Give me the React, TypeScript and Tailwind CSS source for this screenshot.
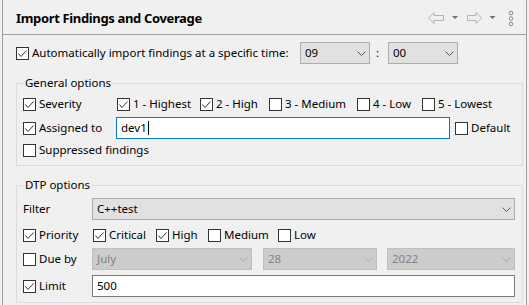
import React from "react";

const FONT = { fontFamily: '"Noto Sans", "Open Sans", sans-serif' };

function Check({ checked }: { checked: boolean }) {
  return (
    <span className="w-[13px] h-[13px] border border-[#333333] bg-white flex items-center justify-center shrink-0">
      {checked && (
        <svg width="11" height="11" viewBox="0 0 11 11">
          <path d="M1.5 5.5 L4 8.5 L9.5 2.5" stroke="#333333" strokeWidth="1" fill="none" />
        </svg>
      )}
    </span>
  );
}

function CheckItem({ checked, label, className }: { checked: boolean; label: string; className: string }) {
  return (
    <div className={"flex items-center gap-[3px] shrink-0 " + className}>
      <Check checked={checked} />
      <span className="whitespace-nowrap leading-none">{label}</span>
    </div>
  );
}

function Chevron({ color }: { color: string }) {
  return (
    <svg width="9" height="5" viewBox="0 0 9 5" className="shrink-0">
      <path d="M0.5 0.5 L4.5 4.5 L8.5 0.5" stroke={color} strokeWidth="1" fill="none" />
    </svg>
  );
}

function Combo({ text, className, disabled }: { text: string; className: string; disabled?: boolean }) {
  return (
    <div
      className={
        "h-[22px] border flex items-center justify-between pl-[4px] pr-[3px] shrink-0 " +
        (disabled ? "bg-[#cccccc] border-[#bfbfbf] text-[#838383] " : "bg-[#e1e1e1] border-[#adadad] text-black ") +
        className
      }
    >
      <span className="leading-none">{text}</span>
      <Chevron color={disabled ? "#a8a8a8" : "#5a5a5a"} />
    </div>
  );
}

function Group({ title, children, className }: { title: string; children: React.ReactNode; className: string }) {
  return (
    <div className={"relative border border-[#dcdcdc] " + className}>
      <span className="absolute left-[7px] top-[-9px] px-[1px] bg-[#f0f0f0] leading-[16px] whitespace-nowrap">{title}</span>
      {children}
    </div>
  );
}

export default function App() {
  return (
    <div className="w-[529px] h-[305px] bg-[#f0f0f0] overflow-hidden text-[11.5px] text-black" style={FONT}>
      <div className="ml-[2px] w-[525px] h-full border-x border-[#a0a0a0]">
        {/* Header */}
        <div className="h-[35px] border-b border-[#a0a0a0] flex items-center pl-[13px] pr-[9px]">
          <span className="font-bold text-[13px] tracking-[-0.35px] whitespace-nowrap pt-[3px]">Import Findings and Coverage</span>
          <svg width="92" height="20" viewBox="0 0 92 20" className="ml-auto mt-[1px]">
            <polygon points="3.5,10 9,4.5 9,7.5 18.5,7.5 18.5,12.5 9,12.5 9,15.5" stroke="#b4b4b4" strokeWidth="1" fill="none" />
            <polygon points="27,8 33,8 30,11" fill="#707070" />
            <polygon points="42.5,7.5 51,7.5 51,4.5 56.5,10 51,15.5 51,12.5 42.5,12.5" stroke="#b4b4b4" strokeWidth="1" fill="none" />
            <polygon points="64.5,8 70.5,8 67.5,11" fill="#707070" />
            <circle cx="86" cy="5" r="1.8" stroke="#8a8a8a" strokeWidth="1" fill="none" />
            <circle cx="86" cy="10.5" r="1.8" stroke="#8a8a8a" strokeWidth="1" fill="none" />
            <circle cx="86" cy="16" r="1.8" stroke="#8a8a8a" strokeWidth="1" fill="none" />
          </svg>
        </div>

        {/* Body */}
        <div className="pl-[13px] pr-[3px] pt-[7px]">
          <div className="h-[22px] flex items-center">
            <CheckItem checked label="Automatically import findings at a specific time:" className="w-[284px]" />
            <Combo text="09" className="w-[70px]" />
            <span className="w-[18px] pl-[6px] leading-none">:</span>
            <Combo text="00" className="w-[70px]" />
          </div>

          <Group title="General options" className="mt-[19px] pl-[6px] pt-[9px] pb-[4px] flex flex-col">
            <div className="h-[22px] flex items-center">
              <CheckItem checked label="Severity" className="w-[94px]" />
              <CheckItem checked label="1 - Highest" className="w-[83px]" />
              <CheckItem checked label="2 - High" className="w-[69px]" />
              <CheckItem checked={false} label="3 - Medium" className="w-[88px]" />
              <CheckItem checked={false} label="4 - Low" className="w-[65px]" />
              <CheckItem checked={false} label="5 - Lowest" className="w-[80px]" />
            </div>
            <div className="h-[22px] mt-[2px] flex items-center">
              <CheckItem checked label="Assigned to" className="w-[93px]" />
              <div className="w-[334px] h-[22px] border border-[#0078d7] bg-white flex items-center pl-[4px]">
                <span className="leading-none">dev1</span>
                <span className="w-[1px] h-[14px] bg-black ml-[1px]" />
              </div>
              <CheckItem checked={false} label="Default" className="ml-[5px]" />
            </div>
            <div className="h-[22px] flex items-center">
              <CheckItem checked={false} label="Suppressed findings" className="w-[200px]" />
            </div>
          </Group>

          <Group title="DTP options" className="mt-[19px] pl-[6px] pr-[7px] pt-[12px] pb-[5px] flex flex-col">
            <div className="h-[22px] flex items-center">
              <span className="w-[69px] leading-none">Filter</span>
              <Combo text="C++test" className="flex-1" />
            </div>
            <div className="h-[22px] mt-[4px] flex items-center">
              <CheckItem checked label="Priority" className="w-[70px]" />
              <CheckItem checked label="Critical" className="w-[63px]" />
              <CheckItem checked label="High" className="w-[52px]" />
              <CheckItem checked={false} label="Medium" className="w-[70px]" />
              <CheckItem checked={false} label="Low" className="w-[60px]" />
            </div>
            <div className="h-[22px] mt-[2px] flex items-center">
              <CheckItem checked={false} label="Due by" className="w-[69px]" />
              <Combo text="July" disabled className="w-[160px]" />
              <Combo text="28" disabled className="w-[114px] ml-[11px]" />
              <Combo text="2022" disabled className="w-[128px] ml-[10px]" />
            </div>
            <div className="h-[22px] mt-[5px] flex items-center">
              <CheckItem checked label="Limit" className="w-[69px]" />
              <div className="flex-1 h-[22px] border border-[#7a7a7a] bg-white flex items-center pl-[4px]">
                <span className="leading-none">500</span>
              </div>
            </div>
          </Group>
        </div>
      </div>
    </div>
  );
}
